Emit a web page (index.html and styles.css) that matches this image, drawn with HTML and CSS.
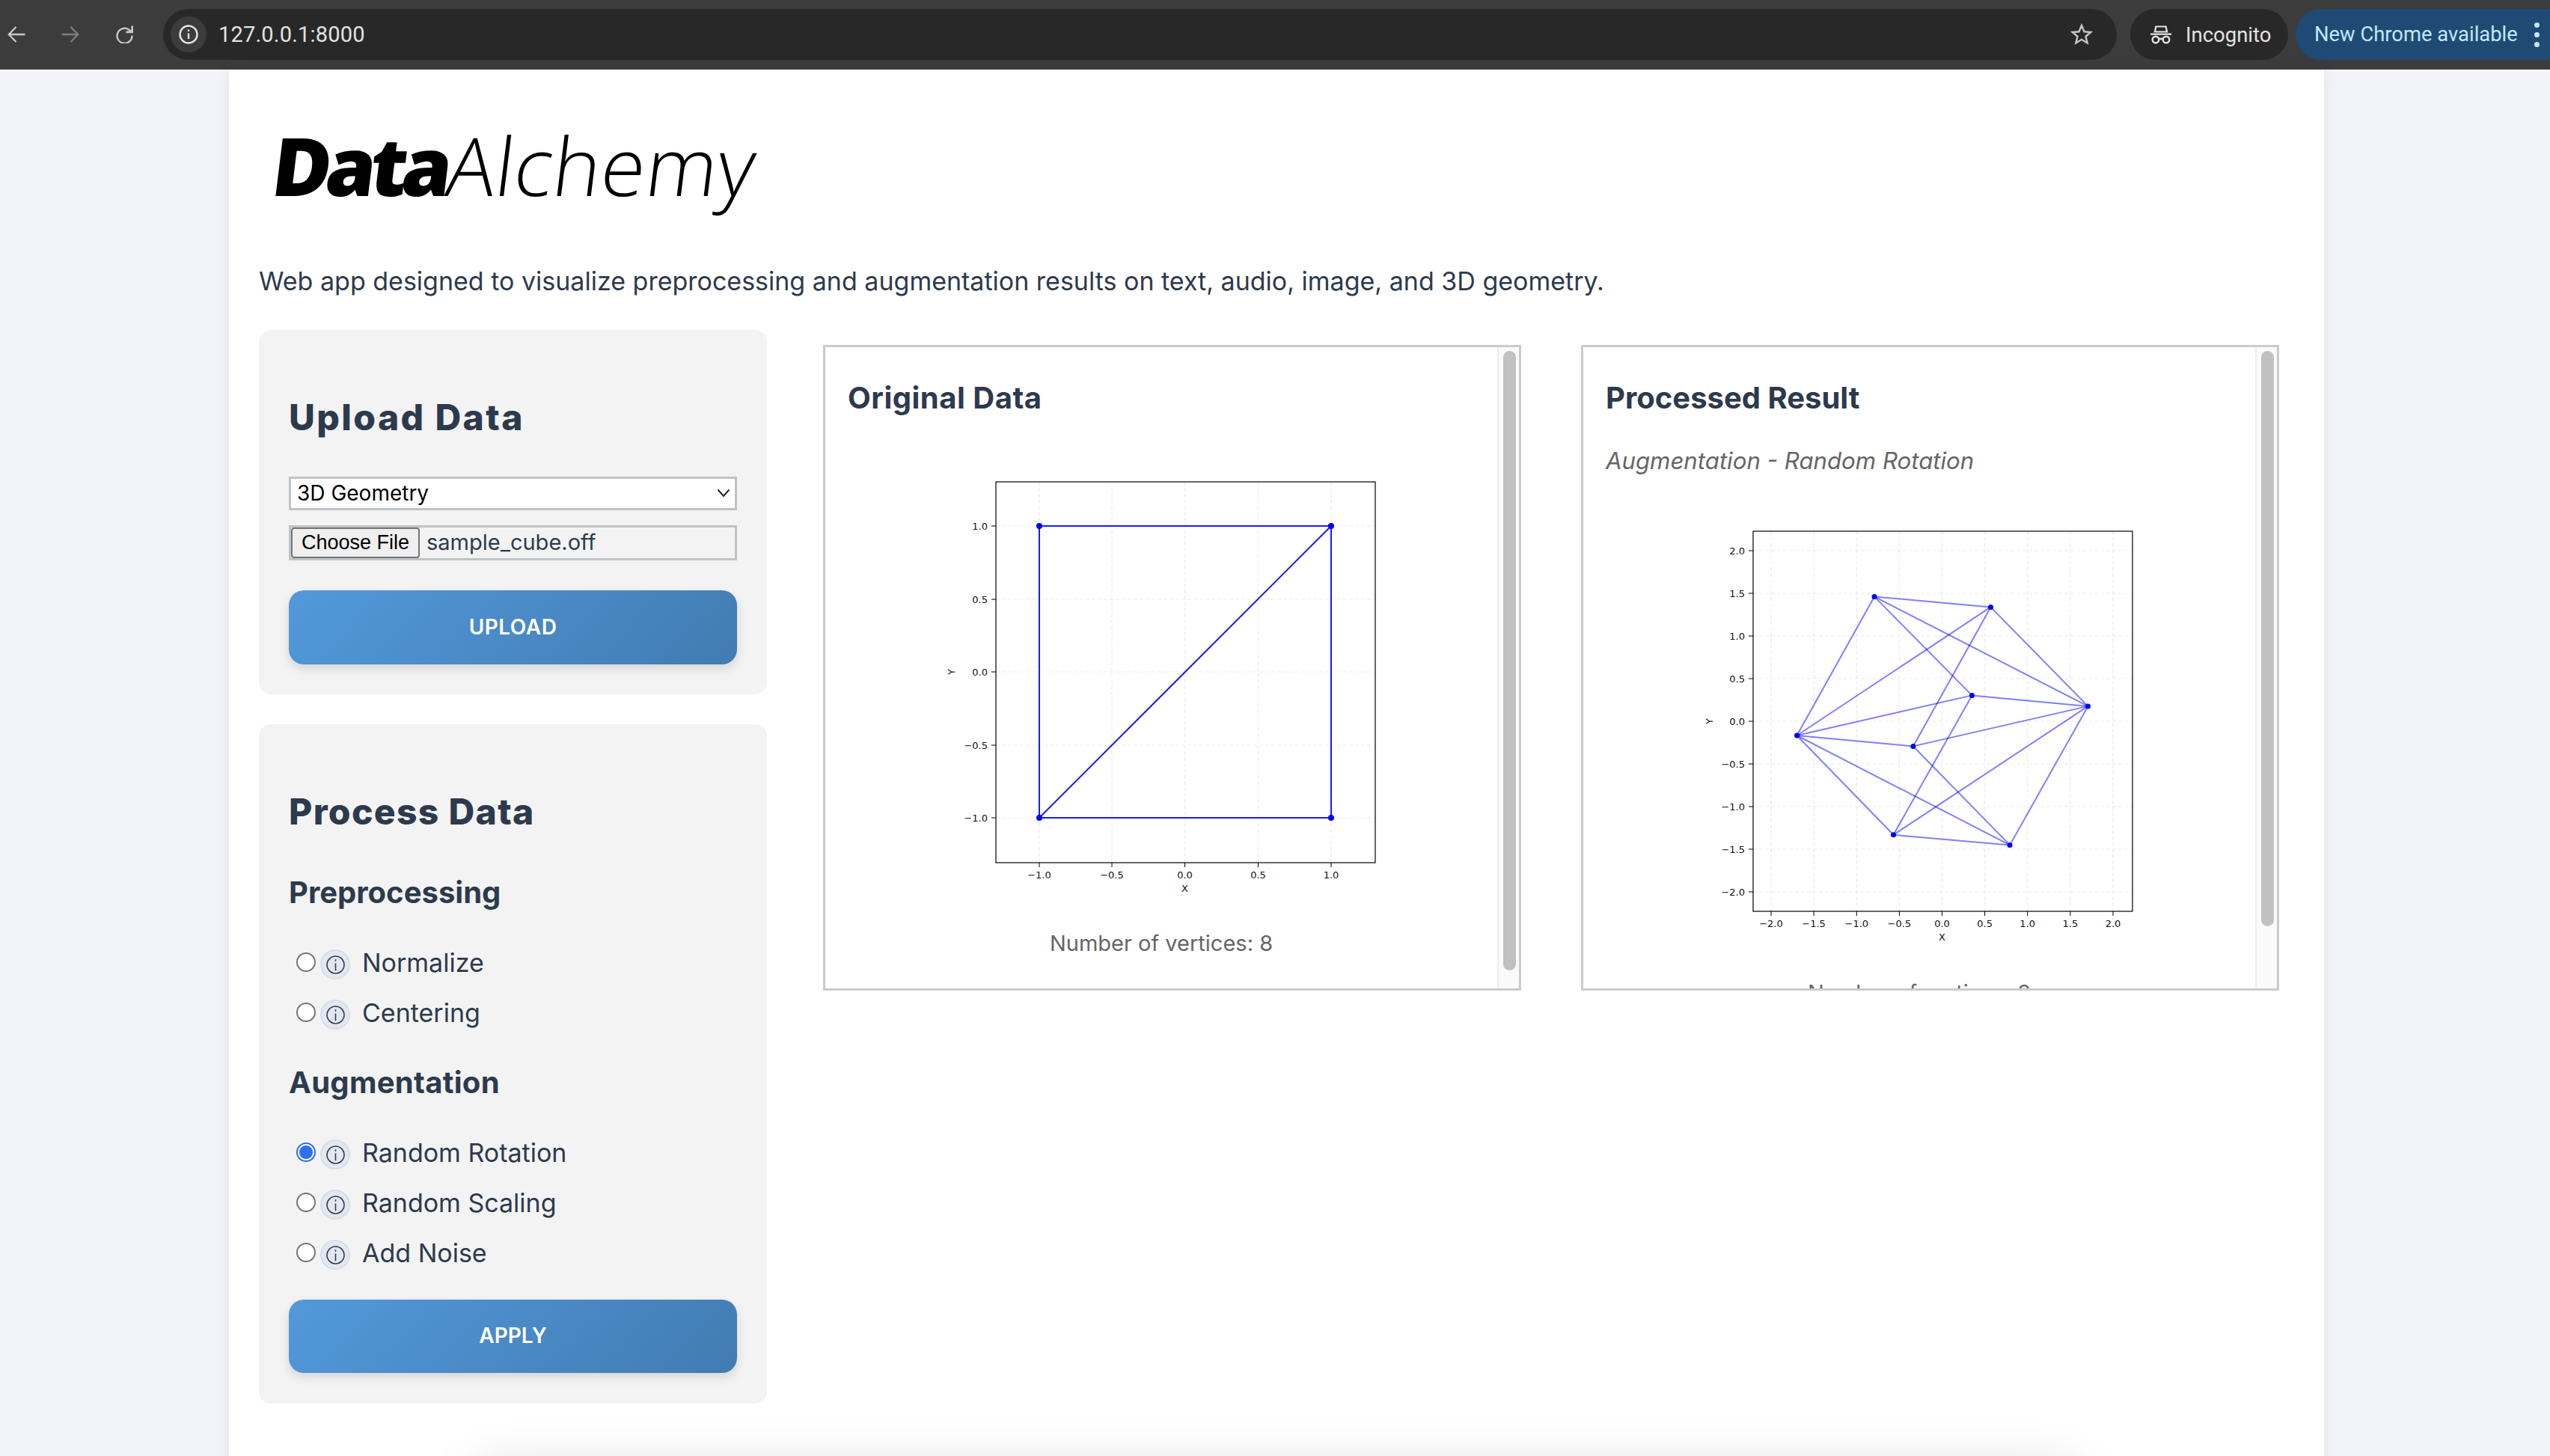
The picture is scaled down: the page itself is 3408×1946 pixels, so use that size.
FILE: index.html
```html
<!DOCTYPE html>
<html lang="en">
<head>
<meta charset="utf-8">
<title>DataAlchemy</title>
<link rel="stylesheet" href="styles.css">
</head>
<body>
<header class="toolbar">
  <div class="nav-icons">
    <svg class="nav-icon nav-back" viewBox="0 0 24 24"><path d="M23.500 12H2.500M11.500 2 1.800 12l9.700 10"/></svg>
    <svg class="nav-icon nav-forward" viewBox="0 0 24 24"><path d="M.5 12h21M12.500 2l9.700 10-9.700 10"/></svg>
    <svg class="nav-icon nav-reload" viewBox="0 0 24 24"><path d="M22.500 13.500A10 10 0 1 1 18 5.500l4 3.200"/><path d="M14.500 8.800h8.300V.5" stroke-width="2.800"/></svg>
  </div>
  <div class="omnibox">
    <span class="site-chip"><svg class="site-info" viewBox="0 0 26 26"><circle cx="13" cy="13" r="11.500"/><path d="M13 11.500v7.500M13 6.500v2.500"/></svg></span>
    <span class="url">127.0.0.1:8000</span>
    <svg class="star" viewBox="0 0 30 30"><path d="M15 3l3.400 8.300 8.900.7-6.800 5.800 2.100 8.700L15 21.800 7.400 26.500l2.100-8.700L2.700 12l8.900-.7z"/></svg>
  </div>
  <div class="incognito">
    <svg class="incognito-icon" viewBox="0 0 30 26"><path class="fill" d="M1 11.500h28v2.200H1zM7.500 1.500h15l2 9h-19zM9.300 3.600l-1 5h13.400l-1-5z" fill-rule="evenodd"/><circle cx="8" cy="20" r="4.300"/><circle cx="22" cy="20" r="4.300"/><path d="M12 19.500c2-1 4-1 6 0"/></svg>
    <span>Incognito</span>
  </div>
  <div class="update">
    <span>New Chrome available</span>
    <span class="update-dots"><i></i><i></i><i></i></span>
  </div>
</header>

<main class="page">
  <h1 class="logo"><b class="logo-data">Data</b><span class="logo-alchemy">Alchemy</span></h1>
  <p class="intro">Web app designed to visualize preprocessing and augmentation results on text, audio, image, and 3D geometry.</p>

  <div class="layout">
    <aside class="sidebar">
      <section class="card card-upload">
        <h2>Upload Data</h2>
        <div class="select-wrap">
          <select class="select"><option>3D Geometry</option><option>Text</option><option>Audio</option><option>Image</option></select>
          <svg class="chevron" viewBox="0 0 18 12"><path d="M1.500 1.500 9 10l7.500-8.500"/></svg>
        </div>
        <div class="file">
          <button class="file-btn" type="button">Choose File</button>
          <span class="file-name">sample_cube.off</span>
        </div>
        <button class="primary primary-upload" type="button">UPLOAD</button>
      </section>

      <section class="card card-process">
        <h2>Process Data</h2>
        <h3 class="group group-pre">Preprocessing</h3>
        <div class="options">
          <label class="option"><input type="radio" name="op"><span class="info"><svg viewBox="0 0 24 24"><circle cx="12" cy="12" r="11"/><path d="M12 10v9.500M12 5v2.500"/></svg></span><span class="option-text">Normalize</span></label>
          <label class="option"><input type="radio" name="op"><span class="info"><svg viewBox="0 0 24 24"><circle cx="12" cy="12" r="11"/><path d="M12 10v9.500M12 5v2.500"/></svg></span><span class="option-text">Centering</span></label>
        </div>
        <h3 class="group group-aug">Augmentation</h3>
        <div class="options">
          <label class="option"><input type="radio" name="op" checked><span class="info"><svg viewBox="0 0 24 24"><circle cx="12" cy="12" r="11"/><path d="M12 10v9.500M12 5v2.500"/></svg></span><span class="option-text">Random Rotation</span></label>
          <label class="option"><input type="radio" name="op"><span class="info"><svg viewBox="0 0 24 24"><circle cx="12" cy="12" r="11"/><path d="M12 10v9.500M12 5v2.500"/></svg></span><span class="option-text">Random Scaling</span></label>
          <label class="option"><input type="radio" name="op"><span class="info"><svg viewBox="0 0 24 24"><circle cx="12" cy="12" r="11"/><path d="M12 10v9.500M12 5v2.500"/></svg></span><span class="option-text">Add Noise</span></label>
        </div>
        <button class="primary primary-apply" type="button">APPLY</button>
      </section>
    </aside>

    <div class="results">
      <section class="result">
        <div class="result-body">
          <h3 class="result-title result-title-original">Original Data</h3>
          <svg class="plot plot-original" viewBox="0 0 640 570" width="640" height="570">
            <g class="grid">
              <path d="M157 20V529M254 20V529M351.500 20V529M449.500 20V529M547 20V529M99 79H606M99 177H606M99 274H606M99 372H606M99 469H606"/>
            </g>
            <g class="ticks"><path d="M157 529v6M254 529v6M351.500 529v6M449.500 529v6M547 529v6M99 79h-6M99 177h-6M99 274h-6M99 372h-6M99 469h-6"/></g>
            <g class="edges">
              <path d="M157 79H547V469H157ZM157 469 547 79"/>
            </g>
            <g class="dots"><circle cx="157" cy="79" r="4"/><circle cx="547" cy="79" r="4"/><circle cx="157" cy="469" r="4"/><circle cx="547" cy="469" r="4"/></g>
            <rect class="frame" x="99" y="20" width="507" height="509"/>
            <g class="tx">
              <text x="157" y="550">−1.0</text><text x="254" y="550">−0.5</text><text x="351.500" y="550">0.0</text><text x="449.500" y="550">0.5</text><text x="547" y="550">1.0</text>
              <text x="351.500" y="568">X</text>
            </g>
            <g class="ty">
              <text x="88" y="84">1.0</text><text x="88" y="182">0.5</text><text x="88" y="279">0.0</text><text x="88" y="377">−0.5</text><text x="88" y="474">−1.0</text>
            </g>
            <text class="ylabel" transform="translate(44 274) rotate(-90)">Y</text>
          </svg>
          <p class="vertices">Number of vertices: 8</p>
        </div>
        <div class="scrollbar"><div class="thumb thumb-original"></div></div>
      </section>

      <section class="result">
        <div class="result-body">
          <h3 class="result-title result-title-processed">Processed Result</h3>
          <p class="subtitle">Augmentation - Random Rotation</p>
          <svg class="plot plot-processed" viewBox="0 0 640 570" width="640" height="570">
            <g class="grid">
              <path d="M122 20V528M179.100 20V528M236.300 20V528M293.400 20V528M350.500 20V528M407.600 20V528M464.700 20V528M521.900 20V528M579 20V528M98 46H605M98 103H605M98 160H605M98 217H605M98 274H605M98 331H605M98 388H605M98 445H605M98 502H605"/>
            </g>
            <g class="ticks"><path d="M122 528v6M179.100 528v6M236.300 528v6M293.400 528v6M350.500 528v6M407.600 528v6M464.700 528v6M521.900 528v6M579 528v6M98 46h-6M98 103h-6M98 160h-6M98 217h-6M98 274h-6M98 331h-6M98 388h-6M98 445h-6M98 502h-6"/></g>
            <g class="edges edges-soft">
              <line x1="260" y1="107.400" x2="415.500" y2="121.400"/>
              <line x1="260" y1="107.400" x2="156.500" y2="293"/>
              <line x1="260" y1="107.400" x2="390.500" y2="239.400"/>
              <line x1="260" y1="107.400" x2="545.500" y2="253.900"/>
              <line x1="415.500" y1="121.400" x2="545.500" y2="253.900"/>
              <line x1="415.500" y1="121.400" x2="156.500" y2="293"/>
              <line x1="415.500" y1="121.400" x2="311.900" y2="307.400"/>
              <line x1="545.500" y1="253.900" x2="390.500" y2="239.400"/>
              <line x1="545.500" y1="253.900" x2="311.900" y2="307.400"/>
              <line x1="545.500" y1="253.900" x2="441.100" y2="439.400"/>
              <line x1="545.500" y1="253.900" x2="285.500" y2="425.800"/>
              <line x1="390.500" y1="239.400" x2="156.500" y2="293"/>
              <line x1="390.500" y1="239.400" x2="285.500" y2="425.800"/>
              <line x1="311.900" y1="307.400" x2="156.500" y2="293"/>
              <line x1="311.900" y1="307.400" x2="441.100" y2="439.400"/>
              <line x1="156.500" y1="293" x2="285.500" y2="425.800"/>
              <line x1="156.500" y1="293" x2="441.100" y2="439.400"/>
              <line x1="285.500" y1="425.800" x2="441.100" y2="439.400"/>
            </g>
            <g class="dots"><circle cx="260" cy="107.400" r="3.500"/><circle cx="415.500" cy="121.400" r="3.500"/><circle cx="545.500" cy="253.900" r="3.500"/><circle cx="390.500" cy="239.400" r="3.500"/><circle cx="311.900" cy="307.400" r="3.500"/><circle cx="156.500" cy="293" r="3.500"/><circle cx="285.500" cy="425.800" r="3.500"/><circle cx="441.100" cy="439.400" r="3.500"/></g>
            <rect class="frame" x="98" y="20" width="507" height="508"/>
            <g class="tx">
              <text x="122" y="549">−2.0</text><text x="179.100" y="549">−1.5</text><text x="236.300" y="549">−1.0</text><text x="293.400" y="549">−0.5</text><text x="350.500" y="549">0.0</text><text x="407.600" y="549">0.5</text><text x="464.700" y="549">1.0</text><text x="521.900" y="549">1.5</text><text x="579" y="549">2.0</text>
              <text x="350.500" y="567">X</text>
            </g>
            <g class="ty">
              <text x="87" y="51">2.0</text><text x="87" y="108">1.5</text><text x="87" y="165">1.0</text><text x="87" y="222">0.5</text><text x="87" y="279">0.0</text><text x="87" y="336">−0.5</text><text x="87" y="393">−1.0</text><text x="87" y="450">−1.5</text><text x="87" y="507">−2.0</text>
            </g>
            <text class="ylabel" transform="translate(44 274) rotate(-90)">Y</text>
          </svg>
          <p class="vertices">Number of vertices: 8</p>
        </div>
        <div class="scrollbar"><div class="thumb thumb-processed"></div></div>
      </section>
    </div>
  </div>
  <div class="footer-card"></div>
</main>
</body>
</html>
```

FILE: styles.css
```css
* { box-sizing: border-box; }
html, body { margin: 0; height: 100%; overflow: hidden; }
body {
  background: #f3f4f9;
  color: #2d3a4d;
  font-family: "Inter", "Liberation Sans", sans-serif;
  display: flex;
  flex-direction: column;
}

/* browser toolbar */
.toolbar {
  flex: none;
  height: 93px;
  background: #3c3c3c;
  border-bottom: 1px solid #484848;
  display: flex;
  align-items: flex-start;
  padding-top: 12px;
  font-family: "Roboto", "Liberation Sans", sans-serif;
}
.nav-icons { display: flex; align-items: center; height: 68px; width: 218px; padding-left: 10px; gap: 48px; }
.nav-icon { width: 24px; height: 24px; fill: none; stroke: #c7c7c7; stroke-width: 2.400; }
.nav-forward { stroke: #7d7d7d; }
.omnibox {
  width: 2611px;
  height: 68px;
  border-radius: 34px;
  background: #282828;
  display: flex;
  align-items: center;
  padding-left: 10px;
  padding-right: 32px;
}
.site-chip { width: 48px; height: 48px; border-radius: 50%; background: #3c3c3c; display: flex; align-items: center; justify-content: center; }
.site-info { width: 26px; height: 26px; fill: none; stroke: #e3e3e3; stroke-width: 2.400; }
.url { margin-left: 16px; font-size: 29px; color: #e3e3e3; flex: 1; letter-spacing: .2px; }
.star { width: 30px; height: 30px; fill: none; stroke: #c7c7c7; stroke-width: 2.400; }
.incognito {
  margin-left: 18px;
  width: 211px;
  height: 68px;
  border-radius: 34px;
  background: #282828;
  color: #e3e3e3;
  display: flex;
  align-items: center;
  padding-left: 26px;
  gap: 18px;
  font-size: 27.500px;
}
.incognito-icon { width: 30px; height: 26px; fill: none; stroke: #e3e3e3; stroke-width: 2.400; }
.incognito-icon .fill { fill: #e3e3e3; stroke: none; }
.update {
  margin-left: 10px;
  flex: 1;
  height: 68px;
  border-radius: 34px 0 0 34px;
  background: #1f4a73;
  color: #c2e7ff;
  display: flex;
  align-items: center;
  padding-left: 25px;
  font-size: 27.400px;
}
.update-dots { margin-left: 22px; display: flex; flex-direction: column; gap: 6px; }
.update-dots i { display: block; width: 7px; height: 7px; border-radius: 50%; background: #c2e7ff; }

/* page */
.page {
  flex: none;
  width: 2800px;
  margin-left: 306px;
  padding: 0 40px;
  background: #fff;
  box-shadow: 0 0 20px rgba(0, 0, 0, .07);
  min-height: 2000px;
}
.logo {
  margin: 0;
  padding: 53px 0 0 19px;
  height: 253px;
  font-family: "Open Sans", "Liberation Sans", sans-serif;
  font-size: 108px;
  line-height: 150px;
  color: #000;
  font-weight: 300;
}
.logo-data, .logo-alchemy { display: inline-block; transform: skewX(-7deg); }
.logo-data { font-weight: 800; letter-spacing: -7.700px; }
.logo-alchemy { letter-spacing: .5px; }
.intro { margin: 0; height: 95px; font-size: 34px; line-height: 60px; color: #2d3a4d; }

.layout { display: grid; grid-template-columns: 679px 1fr; column-gap: 75px; }
.sidebar { display: flex; flex-direction: column; gap: 40px; }
.card { background: #f3f3f3; border-radius: 16px; padding: 88px 40px 40px; }
.card h2 { margin: 0; font-size: 48px; line-height: 58px; font-weight: 800; color: #2d3a4d; }
.card-upload h2 { letter-spacing: 2.400px; }
.card-process h2 { letter-spacing: 1.350px; }
.card-process { padding-bottom: 41px; }

.select-wrap { position: relative; margin-top: 50px; height: 45px; }
.select {
  display: block;
  width: 100%;
  height: 45px;
  appearance: none;
  background: #fff;
  border: 3px solid #bdc3c9;
  border-radius: 0;
  padding: 0 8px 2px;
  font-family: "Inter", sans-serif;
  font-size: 28px;
  color: #000;
}
.chevron { position: absolute; right: 9px; top: 16px; width: 18px; height: 12px; fill: none; stroke: #222; stroke-width: 2; }
.file {
  margin-top: 20px;
  height: 47px;
  border: 3px solid #bdc3c9;
  display: flex;
  align-items: center;
  font-size: 29px;
}
.file-btn {
  width: 172px;
  height: 41px;
  padding: 0;
  background: #efefef;
  border: 2px solid #767676;
  border-radius: 4px;
  font-family: "Liberation Sans", sans-serif;
  font-size: 27px;
  color: #000;
}
.file-name { margin: 0 0 2px 9px; color: #2d3a4d; }
.primary {
  display: block;
  width: 100%;
  border: 0;
  border-radius: 20px;
  color: #fff;
  background: linear-gradient(135deg, #5299db, #427bb2);
  box-shadow: 0 6px 14px rgba(0, 0, 0, .12);
  font-family: "Inter", sans-serif;
  font-size: 28px;
  font-weight: 600;
  padding: 0 0 2px;
}
.primary-upload { margin-top: 40px; height: 99px; letter-spacing: .5px; }
.primary-apply { margin-top: 40px; height: 98px; }

.group { margin: 0; font-size: 40px; line-height: 48px; font-weight: 700; color: #2d3a4d; }
.group-pre { margin-top: 55px; }
.group-aug { margin-top: 47px; letter-spacing: .3px; }
.options { margin-top: 52px; display: flex; flex-direction: column; gap: 27px; }
.option { height: 40px; display: flex; align-items: center; padding-left: 10px; font-size: 34px; color: #2d3a4d; }
.option input {
  appearance: none;
  width: 26px;
  height: 26px;
  margin: 0 6px 7px 0;
  background: #fff;
  border: 2px solid #767676;
  border-radius: 50%;
}
.option input:checked {
  border-color: #2f6ff0;
  background: radial-gradient(circle, #2f6ff0 0 8.500px, #fff 9.500px);
}
.info { width: 40px; height: 40px; border-radius: 50%; background: #e2e7f0; border: 2px solid #d7deea; display: flex; align-items: center; justify-content: center; }
.info svg { width: 25px; height: 25px; fill: none; stroke: #2d3a4d; stroke-width: 1.500; }
.option-text { margin: 0 0 6px 16px; }

.results { display: grid; grid-template-columns: 933px 933px; column-gap: 80px; margin-top: 20px; align-self: start; }
.result {
  height: 863px;
  border: 3px solid #cbcbcb;
  display: flex;
}
.result-body { flex: 1; min-width: 0; overflow: hidden; padding: 44px 30px 68px; }
.scrollbar { flex: none; width: 29px; background: #fafafa; border-left: 2px solid #ececec; padding: 5px 4px 0 6px; }
.thumb { border-radius: 10px; background: #c1c1c1; }
.thumb-original { height: 828px; }
.thumb-processed { height: 769px; }
.result-title { margin: 0; font-size: 40px; line-height: 48px; font-weight: 700; color: #2d3a4d; }
.result-title-original { letter-spacing: .5px; }
.subtitle { margin: 38px 0 0; font-size: 31.200px; line-height: 44px; font-style: italic; color: #666; }
.plot { display: block; margin: 68px auto 0; }
.plot-processed { margin-top: 52px; }
.vertices { margin: 45px 0 0; text-align: center; font-size: 29px; line-height: 44px; color: #666; }

.grid path { fill: none; stroke: #ececec; stroke-width: 1.200; stroke-dasharray: 5 3; }
.ticks path { fill: none; stroke: #000; stroke-width: 1; }
.edges path, .edges line { fill: none; stroke: #1a1aff; stroke-width: 2; }
.edges-soft line { stroke: #0000ff; stroke-opacity: .5; }
.dots circle { fill: #0000f0; }
.frame { fill: none; stroke: #000; stroke-width: 1.200; }
.tx text, .ty text, .ylabel { font-family: "DejaVu Sans", sans-serif; font-size: 13px; fill: #111; }
.tx text { text-anchor: middle; }
.ty text { text-anchor: end; }
.ylabel { text-anchor: middle; }

.footer-card {
  width: 2140px;
  height: 200px;
  margin: 90px auto 0;
  background: #fff;
  border-radius: 30px;
  box-shadow: 0 0 70px rgba(0, 0, 0, .17);
}
```
